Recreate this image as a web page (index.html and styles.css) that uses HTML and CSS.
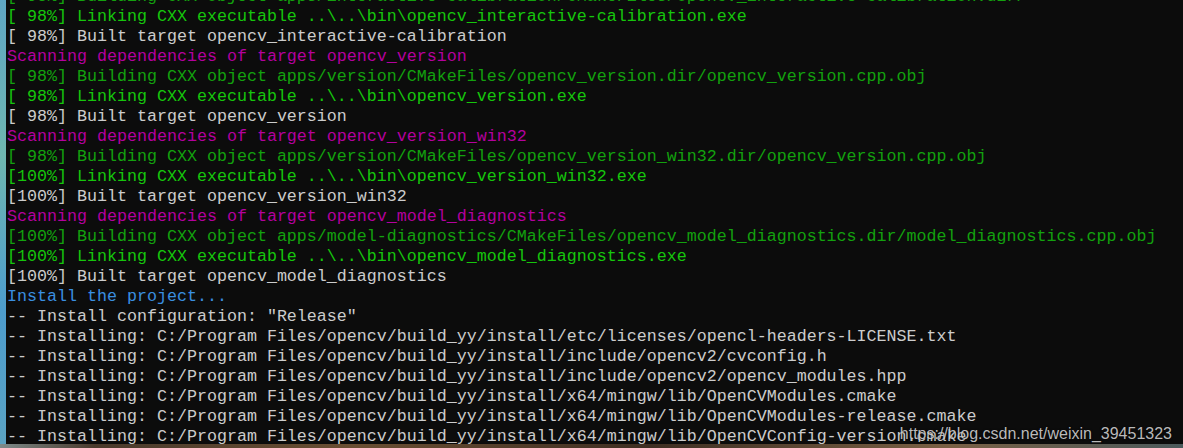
FILE: index.html
```html
<!DOCTYPE html>
<html lang="en">
<head>
    <meta charset="UTF-8">
    <title>cmake install</title>
    <link rel="stylesheet" href="styles.css">
</head>
<body>
    <div class="desktop">
        <div class="edge"></div>
        <div class="console">
            <div class="line cut green">[ 98%] Building CXX object apps/interactive-calibration/CMakeFiles/opencv_interactive-calibration.dir/</div>
            <div class="line bright">[ 98%] Linking CXX executable ..\..\bin\opencv_interactive-calibration.exe</div>
            <div class="line">[ 98%] Built target opencv_interactive-calibration</div>
            <div class="line magenta">Scanning dependencies of target opencv_version</div>
            <div class="line green">[ 98%] Building CXX object apps/version/CMakeFiles/opencv_version.dir/opencv_version.cpp.obj</div>
            <div class="line bright">[ 98%] Linking CXX executable ..\..\bin\opencv_version.exe</div>
            <div class="line">[ 98%] Built target opencv_version</div>
            <div class="line magenta">Scanning dependencies of target opencv_version_win32</div>
            <div class="line green">[ 98%] Building CXX object apps/version/CMakeFiles/opencv_version_win32.dir/opencv_version.cpp.obj</div>
            <div class="line bright">[100%] Linking CXX executable ..\..\bin\opencv_version_win32.exe</div>
            <div class="line">[100%] Built target opencv_version_win32</div>
            <div class="line magenta">Scanning dependencies of target opencv_model_diagnostics</div>
            <div class="line green">[100%] Building CXX object apps/model-diagnostics/CMakeFiles/opencv_model_diagnostics.dir/model_diagnostics.cpp.obj</div>
            <div class="line bright">[100%] Linking CXX executable ..\..\bin\opencv_model_diagnostics.exe</div>
            <div class="line">[100%] Built target opencv_model_diagnostics</div>
            <div class="line blue">Install the project...</div>
            <div class="line">-- Install configuration: "Release"</div>
            <div class="line">-- Installing: C:/Program Files/opencv/build_yy/install/etc/licenses/opencl-headers-LICENSE.txt</div>
            <div class="line">-- Installing: C:/Program Files/opencv/build_yy/install/include/opencv2/cvconfig.h</div>
            <div class="line">-- Installing: C:/Program Files/opencv/build_yy/install/include/opencv2/opencv_modules.hpp</div>
            <div class="line">-- Installing: C:/Program Files/opencv/build_yy/install/x64/mingw/lib/OpenCVModules.cmake</div>
            <div class="line">-- Installing: C:/Program Files/opencv/build_yy/install/x64/mingw/lib/OpenCVModules-release.cmake</div>
            <div class="line">-- Installing: C:/Program Files/opencv/build_yy/install/x64/mingw/lib/OpenCVConfig-version.cmake</div>
        </div>
    </div>
    <div class="wallpaper"></div>
    <div class="watermark">https://blog.csdn.net/weixin_39451323</div>
</body>
</html>
```

FILE: styles.css
```css
* {
    margin: 0;
    padding: 0;
    box-sizing: border-box;
}
html, body {
    width: 100%;
    height: 100%;
    overflow: hidden;
    background-color: #0c0c0c;
}
body {
    display: flex;
    flex-direction: column;
    position: relative;
}
.desktop {
    display: flex;
    height: 444px;
}
.edge {
    width: 6px;
    flex-shrink: 0;
    background: linear-gradient(180deg, #5fa6c4 0%, #6fb7b0 35%, #4d9ccd 70%, #5aa2c2 100%);
}
.console {
    flex: 1;
    overflow: hidden;
    background-color: #0c0c0c;
    padding-left: 1px;
    font-family: "Liberation Mono", "DejaVu Sans Mono", monospace;
    font-size: 16.667px;
    color: #cccccc;
}
.line {
    height: 20px;
    line-height: 20px;
    white-space: pre;
}
.cut {
    margin-top: -13px;
}
.green {
    color: #13a10e;
}
.bright {
    color: #16c60c;
}
.magenta {
    color: #b4009e;
}
.blue {
    color: #3a8fe0;
}
.wallpaper {
    flex: 1;
    background: linear-gradient(90deg, #7d8a8a 0%, #4a3a2c 8%, #6b4f33 30%, #3e2e22 55%, #7a6044 80%, #4c5a5c 100%);
}
.watermark {
    position: absolute;
    right: 11px;
    bottom: 5px;
    font-family: "Liberation Sans", Arial, sans-serif;
    font-size: 16px;
    color: rgba(220, 220, 220, 0.85);
    text-shadow: 0 0 2px rgba(0, 0, 0, 0.6);
}
```
